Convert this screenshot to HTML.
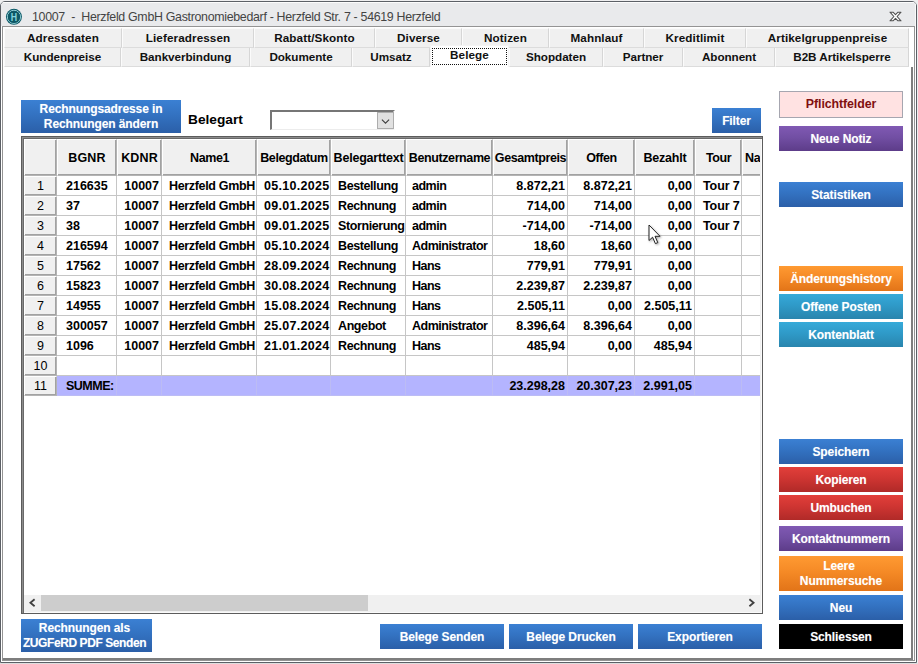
<!DOCTYPE html>
<html lang="de"><head><meta charset="utf-8"><title>10007 - Herzfeld GmbH Gastronomiebedarf</title>
<style>
*{box-sizing:border-box;margin:0;padding:0}
html,body{width:918px;height:664px;overflow:hidden;background:#efeff0;font-family:"Liberation Sans",Arial,sans-serif;}
.abs,.abs>*{position:absolute}
#win{position:absolute;left:0;top:1px;width:917px;height:662px;border:1px solid #5c6066;border-radius:5px 5px 0 0;background:#fff;overflow:hidden}
#tb{position:absolute;left:0;top:0;width:915px;height:24px;background:#e9eaec;border-top:1px solid #fcfcfc;border-right:1px solid #fafafa}
#title{position:absolute;left:31px;top:7px;font-size:12.4px;color:#444;white-space:pre;line-height:16px;letter-spacing:-0.31px}
#frame{position:absolute;left:1px;top:24px;width:913px;height:635px;border:1px solid #949494;background:#fff}
#page{position:absolute;left:2px;top:65px;width:910px;height:593px;border-right:2px solid #7e7e7e;border-bottom:2px solid #7e7e7e;background:#fff}
.tab{position:absolute;height:20px;background:#f0f0f0;border-left:1px solid #fbfbfb;border-top:1px solid #fbfbfb;border-right:1px solid #d6d6d6;border-bottom:1px solid #dcdcdc;font-weight:bold;font-size:11.7px;line-height:18px;text-align:center;color:#111;white-space:nowrap;letter-spacing:.1px}
.tab.act{background:#fff;border:1px solid #f4f4f4;border-bottom:none;height:22px}
.focus{position:absolute;border:1px dotted #111}
.btn{position:absolute;color:#fff;font-weight:bold;font-size:12px;letter-spacing:-.1px;text-align:center;white-space:nowrap;text-shadow:0 0 1px rgba(255,255,255,.35)}
.b-blue{background:linear-gradient(#3b80d3,#3372c1 45%,#2b5fa8)}
.b-red{background:linear-gradient(#e23f3a,#cf3532 45%,#b02a28)}
.b-purple{background:linear-gradient(#8059b3,#724fa4 45%,#5d3c89)}
.b-orange{background:linear-gradient(#ff9a32,#f58a26 45%,#e27418)}
.b-cyan{background:linear-gradient(#36aad9,#2f9ac8 45%,#2985ad)}
.b-black{background:#000}
.b-pink{background:#ffe2e2;border:1px solid #a6a6b0;color:#800f0f;text-shadow:none}
#grid{position:absolute;width:742px;height:478px;border:1px solid #5c5c5c;background:#fff;box-shadow:inset 1px 1px 0 #8c8c8c,inset 2px 2px 0 #6a6a6a,inset -1px -1px 0 #fafafa,inset -2px -2px 0 #f0f0f0}
#gin{position:absolute;left:2px;top:2px;width:736px;height:472px;overflow:hidden}
.hc{position:absolute;background:#f0f0f0;border-left:1px solid #fff;border-top:1px solid #fff;border-right:1px solid #b4b4b4;border-bottom:1px solid #b4b4b4;box-shadow:inset -1px -1px 0 #a2a2a2;font-weight:bold;font-size:12.5px;letter-spacing:-.4px;text-align:center;white-space:nowrap;overflow:hidden;color:#000}
.rc{position:absolute;background:#f0f0f0;border-left:1px solid #fff;border-top:1px solid #fff;border-right:1px solid #b4b4b4;border-bottom:1px solid #b4b4b4;box-shadow:inset -1px -1px 0 #a2a2a2;font-size:12.5px;text-align:center;color:#000;line-height:19px}
.dc{position:absolute;height:20px;border-right:1px solid #c6c6c6;border-bottom:1px solid #c6c6c6;font-weight:bold;font-size:12.5px;line-height:20px;white-space:nowrap;overflow:hidden;color:#000;letter-spacing:-.5px}
.dc.l{padding-left:7px}
.dc.bgnr{padding-left:9px}
.dc.tour{padding-left:8px;letter-spacing:-.1px}
.dc.n.date{letter-spacing:.3px;padding-left:7px}
.dc.name{letter-spacing:-.33px}
.dc.art{letter-spacing:-.4px}
.dc.user{padding-left:6px}
.dc.r{text-align:right;padding-right:2px}
.dc.n{letter-spacing:0}
.sum{background:#b4b4ff;border-color:#bcbcf4}
</style></head><body>
<div id="win">
<div id="tb"></div>
<svg style="position:absolute;left:4px;top:6px" width="18" height="18" viewBox="0 0 18 18"><circle cx="8.95" cy="8.85" r="8" fill="#0f5c6a"/><circle cx="8.95" cy="8.85" r="6.55" fill="none" stroke="#b4eaf0" stroke-width="0.85"/><circle cx="8.95" cy="8.85" r="6.1" fill="#0d5866"/><text x="8.95" y="12.75" font-family="Liberation Sans,Arial,sans-serif" font-weight="bold" font-size="10.8" text-anchor="middle" fill="#86d4de" textLength="6.4" lengthAdjust="spacingAndGlyphs">H</text></svg>
<div id="title">10007  -  Herzfeld GmbH Gastronomiebedarf - Herzfeld Str. 7 - 54619 Herzfeld</div>
<svg style="position:absolute;left:888px;top:9px" width="13" height="11" viewBox="0 0 13 11"><path d="M1 1.2 L4 1.2 L6.5 3.7 L9 1.2 L12 1.2 L8.1 5.5 L12 9.8 L9 9.8 L6.5 7.3 L4 9.8 L1 9.8 L4.9 5.5 Z" fill="#fff" stroke="#505050" stroke-width="1.1" stroke-linejoin="round"/></svg>
<div id="frame"></div>
<div id="page"></div>

<div class="tab" style="left:3px;top:26px;width:118px">Adressdaten</div>
<div class="tab" style="left:121px;top:26px;width:132px">Lieferadressen</div>
<div class="tab" style="left:253px;top:26px;width:121px">Rabatt/Skonto</div>
<div class="tab" style="left:374px;top:26px;width:87px">Diverse</div>
<div class="tab" style="left:461px;top:26px;width:87px">Notizen</div>
<div class="tab" style="left:548px;top:26px;width:95px">Mahnlauf</div>
<div class="tab" style="left:643px;top:26px;width:102px">Kreditlimit</div>
<div class="tab" style="left:745px;top:26px;width:163px">Artikelgruppenpreise</div>
<div class="tab" style="left:3px;top:46px;height:19px;line-height:17px;border-top:none;letter-spacing:-.05px;width:117px">Kundenpreise</div>
<div class="tab" style="left:120px;top:46px;height:19px;line-height:17px;border-top:none;letter-spacing:-.05px;width:129px">Bankverbindung</div>
<div class="tab" style="left:249px;top:46px;height:19px;line-height:17px;border-top:none;letter-spacing:-.05px;width:102px">Dokumente</div>
<div class="tab" style="left:351px;top:46px;height:19px;line-height:17px;border-top:none;letter-spacing:-.05px;width:78px">Umsatz</div>
<div class="tab" style="left:508px;top:46px;height:19px;line-height:17px;border-top:none;letter-spacing:-.05px;width:94px">Shopdaten</div>
<div class="tab" style="left:602px;top:46px;height:19px;line-height:17px;border-top:none;letter-spacing:-.05px;width:80px">Partner</div>
<div class="tab" style="left:682px;top:46px;height:19px;line-height:17px;border-top:none;letter-spacing:-.05px;width:92px">Abonnent</div>
<div class="tab" style="left:774px;top:46px;height:19px;line-height:17px;border-top:none;letter-spacing:-.05px;width:134px">B2B Artikelsperre</div>
<div class="tab act" style="left:429px;top:43px;width:79px;line-height:17px">Belege</div>
<div class="focus" style="left:431px;top:46px;width:75px;height:17px"></div>
<div class="btn b-blue" style="left:20px;top:98px;width:160px;height:33px;line-height:15px;padding-top:1.5px;">Rechnungsadresse in<br>Rechnungen ändern</div>
<div style="position:absolute;left:187px;top:110px;font-weight:bold;font-size:13.7px;line-height:16px;color:#000">Belegart</div>
<div style="position:absolute;left:269px;top:108px;width:125px;height:20px;border:2px solid;border-color:#767676 #fff #ececec #767676;border-bottom-width:1px;background:#fff"></div>
<div style="position:absolute;left:376px;top:110px;width:17px;height:17px;border:1px solid #adadad;background:#e1e1e1"></div>
<svg style="position:absolute;left:379px;top:115px" width="11" height="9" viewBox="0 0 11 9"><path d="M1.9 2.7 L5.5 6.2 L9.1 2.7" fill="none" stroke="#3c3c3c" stroke-width="1.1"/></svg>
<div class="btn b-blue" style="left:711px;top:106px;width:49px;height:25px;line-height:27px;">Filter</div>
<div class="btn b-pink" style="left:778px;top:89px;width:124px;height:27px;line-height:29px;font-size:12.4px;line-height:25px;">Pflichtfelder</div>
<div class="btn b-purple" style="left:778px;top:124px;width:124px;height:25px;line-height:27px;">Neue Notiz</div>
<div class="btn b-blue" style="left:778px;top:180px;width:124px;height:25px;line-height:27px;">Statistiken</div>
<div class="btn b-orange" style="left:778px;top:264px;width:124px;height:25px;line-height:27px;">Änderungshistory</div>
<div class="btn b-cyan" style="left:778px;top:292px;width:124px;height:25px;line-height:27px;">Offene Posten</div>
<div class="btn b-cyan" style="left:778px;top:320px;width:124px;height:25px;line-height:27px;">Kontenblatt</div>
<div class="btn b-blue" style="left:778px;top:437px;width:124px;height:25px;line-height:27px;">Speichern</div>
<div class="btn b-red" style="left:778px;top:465px;width:124px;height:25px;line-height:27px;">Kopieren</div>
<div class="btn b-red" style="left:778px;top:493px;width:124px;height:25px;line-height:27px;">Umbuchen</div>
<div class="btn b-purple" style="left:778px;top:524px;width:124px;height:25px;line-height:27px;">Kontaktnummern</div>
<div class="btn b-orange" style="left:778px;top:554px;width:124px;height:35px;line-height:15px;padding-top:2.5px;"><span style="position:relative;left:-2px">Leere</span><br>Nummersuche</div>
<div class="btn b-blue" style="left:778px;top:593px;width:124px;height:25px;line-height:27px;">Neu</div>
<div class="btn b-black" style="left:778px;top:622px;width:124px;height:25px;line-height:27px;">Schliessen</div>
<div class="btn b-blue" style="left:20px;top:617px;width:131px;height:33px;line-height:15px;padding-top:1.5px;padding-right:4px;">Rechnungen als<br><span style="letter-spacing:-.42px">ZUGFeRD PDF Senden</span></div>
<div class="btn b-blue" style="left:379px;top:622px;width:124px;height:25px;line-height:27px;">Belege Senden</div>
<div class="btn b-blue" style="left:508px;top:622px;width:124px;height:25px;line-height:27px;">Belege Drucken</div>
<div class="btn b-blue" style="left:637px;top:622px;width:124px;height:25px;line-height:27px;">Exportieren</div>
<div id="grid" style="left:20px;top:134px"><div id="gin">
<div class="hc" style="left:0px;top:0;width:33px;height:37px;line-height:36px"></div>
<div class="hc" style="left:33px;top:0;width:60px;height:37px;line-height:36px;letter-spacing:.15px">BGNR</div>
<div class="hc" style="left:93px;top:0;width:45px;height:37px;line-height:36px;letter-spacing:.15px">KDNR</div>
<div class="hc" style="left:138px;top:0;width:95px;height:37px;line-height:36px">Name1</div>
<div class="hc" style="left:233px;top:0;width:74px;height:37px;line-height:36px">Belegdatum</div>
<div class="hc" style="left:307px;top:0;width:75px;height:37px;line-height:36px;letter-spacing:-.2px">Belegarttext</div>
<div class="hc" style="left:382px;top:0;width:87px;height:37px;line-height:36px">Benutzername</div>
<div class="hc" style="left:469px;top:0;width:75px;height:37px;line-height:36px">Gesamtpreis</div>
<div class="hc" style="left:544px;top:0;width:67px;height:37px;line-height:36px">Offen</div>
<div class="hc" style="left:611px;top:0;width:60px;height:37px;line-height:36px;letter-spacing:-.2px">Bezahlt</div>
<div class="hc" style="left:671px;top:0;width:47px;height:37px;line-height:36px">Tour</div>
<div class="hc" style="left:718px;top:0;width:59px;height:37px;line-height:36px;text-align:left;padding-left:2px">Na</div>
<div class="rc" style="left:0px;top:37px;width:33px;height:20px">1</div>
<div class="dc l bgnr n" style="left:33px;top:37px;width:60px">216635</div>
<div class="dc r kdnr n" style="left:93px;top:37px;width:45px">10007</div>
<div class="dc l name" style="left:138px;top:37px;width:95px">Herzfeld GmbH</div>
<div class="dc l date n" style="left:233px;top:37px;width:74px">05.10.2025</div>
<div class="dc l art" style="left:307px;top:37px;width:75px">Bestellung</div>
<div class="dc l user" style="left:382px;top:37px;width:87px">admin</div>
<div class="dc r ges n" style="left:469px;top:37px;width:75px">8.872,21</div>
<div class="dc r off n" style="left:544px;top:37px;width:67px">8.872,21</div>
<div class="dc r bez n" style="left:611px;top:37px;width:60px">0,00</div>
<div class="dc l tour" style="left:671px;top:37px;width:47px">Tour 7</div>
<div class="dc l na" style="left:718px;top:37px;width:59px"></div>
<div class="rc" style="left:0px;top:57px;width:33px;height:20px">2</div>
<div class="dc l bgnr n" style="left:33px;top:57px;width:60px">37</div>
<div class="dc r kdnr n" style="left:93px;top:57px;width:45px">10007</div>
<div class="dc l name" style="left:138px;top:57px;width:95px">Herzfeld GmbH</div>
<div class="dc l date n" style="left:233px;top:57px;width:74px">09.01.2025</div>
<div class="dc l art" style="left:307px;top:57px;width:75px">Rechnung</div>
<div class="dc l user" style="left:382px;top:57px;width:87px">admin</div>
<div class="dc r ges n" style="left:469px;top:57px;width:75px">714,00</div>
<div class="dc r off n" style="left:544px;top:57px;width:67px">714,00</div>
<div class="dc r bez n" style="left:611px;top:57px;width:60px">0,00</div>
<div class="dc l tour" style="left:671px;top:57px;width:47px">Tour 7</div>
<div class="dc l na" style="left:718px;top:57px;width:59px"></div>
<div class="rc" style="left:0px;top:77px;width:33px;height:20px">3</div>
<div class="dc l bgnr n" style="left:33px;top:77px;width:60px">38</div>
<div class="dc r kdnr n" style="left:93px;top:77px;width:45px">10007</div>
<div class="dc l name" style="left:138px;top:77px;width:95px">Herzfeld GmbH</div>
<div class="dc l date n" style="left:233px;top:77px;width:74px">09.01.2025</div>
<div class="dc l art" style="left:307px;top:77px;width:75px">Stornierung</div>
<div class="dc l user" style="left:382px;top:77px;width:87px">admin</div>
<div class="dc r ges n" style="left:469px;top:77px;width:75px">-714,00</div>
<div class="dc r off n" style="left:544px;top:77px;width:67px">-714,00</div>
<div class="dc r bez n" style="left:611px;top:77px;width:60px">0,00</div>
<div class="dc l tour" style="left:671px;top:77px;width:47px">Tour 7</div>
<div class="dc l na" style="left:718px;top:77px;width:59px"></div>
<div class="rc" style="left:0px;top:97px;width:33px;height:20px">4</div>
<div class="dc l bgnr n" style="left:33px;top:97px;width:60px">216594</div>
<div class="dc r kdnr n" style="left:93px;top:97px;width:45px">10007</div>
<div class="dc l name" style="left:138px;top:97px;width:95px">Herzfeld GmbH</div>
<div class="dc l date n" style="left:233px;top:97px;width:74px">05.10.2024</div>
<div class="dc l art" style="left:307px;top:97px;width:75px">Bestellung</div>
<div class="dc l user" style="left:382px;top:97px;width:87px">Administrator</div>
<div class="dc r ges n" style="left:469px;top:97px;width:75px">18,60</div>
<div class="dc r off n" style="left:544px;top:97px;width:67px">18,60</div>
<div class="dc r bez n" style="left:611px;top:97px;width:60px">0,00</div>
<div class="dc l tour" style="left:671px;top:97px;width:47px"></div>
<div class="dc l na" style="left:718px;top:97px;width:59px"></div>
<div class="rc" style="left:0px;top:117px;width:33px;height:20px">5</div>
<div class="dc l bgnr n" style="left:33px;top:117px;width:60px">17562</div>
<div class="dc r kdnr n" style="left:93px;top:117px;width:45px">10007</div>
<div class="dc l name" style="left:138px;top:117px;width:95px">Herzfeld GmbH</div>
<div class="dc l date n" style="left:233px;top:117px;width:74px">28.09.2024</div>
<div class="dc l art" style="left:307px;top:117px;width:75px">Rechnung</div>
<div class="dc l user" style="left:382px;top:117px;width:87px">Hans</div>
<div class="dc r ges n" style="left:469px;top:117px;width:75px">779,91</div>
<div class="dc r off n" style="left:544px;top:117px;width:67px">779,91</div>
<div class="dc r bez n" style="left:611px;top:117px;width:60px">0,00</div>
<div class="dc l tour" style="left:671px;top:117px;width:47px"></div>
<div class="dc l na" style="left:718px;top:117px;width:59px"></div>
<div class="rc" style="left:0px;top:137px;width:33px;height:20px">6</div>
<div class="dc l bgnr n" style="left:33px;top:137px;width:60px">15823</div>
<div class="dc r kdnr n" style="left:93px;top:137px;width:45px">10007</div>
<div class="dc l name" style="left:138px;top:137px;width:95px">Herzfeld GmbH</div>
<div class="dc l date n" style="left:233px;top:137px;width:74px">30.08.2024</div>
<div class="dc l art" style="left:307px;top:137px;width:75px">Rechnung</div>
<div class="dc l user" style="left:382px;top:137px;width:87px">Hans</div>
<div class="dc r ges n" style="left:469px;top:137px;width:75px">2.239,87</div>
<div class="dc r off n" style="left:544px;top:137px;width:67px">2.239,87</div>
<div class="dc r bez n" style="left:611px;top:137px;width:60px">0,00</div>
<div class="dc l tour" style="left:671px;top:137px;width:47px"></div>
<div class="dc l na" style="left:718px;top:137px;width:59px"></div>
<div class="rc" style="left:0px;top:157px;width:33px;height:20px">7</div>
<div class="dc l bgnr n" style="left:33px;top:157px;width:60px">14955</div>
<div class="dc r kdnr n" style="left:93px;top:157px;width:45px">10007</div>
<div class="dc l name" style="left:138px;top:157px;width:95px">Herzfeld GmbH</div>
<div class="dc l date n" style="left:233px;top:157px;width:74px">15.08.2024</div>
<div class="dc l art" style="left:307px;top:157px;width:75px">Rechnung</div>
<div class="dc l user" style="left:382px;top:157px;width:87px">Hans</div>
<div class="dc r ges n" style="left:469px;top:157px;width:75px">2.505,11</div>
<div class="dc r off n" style="left:544px;top:157px;width:67px">0,00</div>
<div class="dc r bez n" style="left:611px;top:157px;width:60px">2.505,11</div>
<div class="dc l tour" style="left:671px;top:157px;width:47px"></div>
<div class="dc l na" style="left:718px;top:157px;width:59px"></div>
<div class="rc" style="left:0px;top:177px;width:33px;height:20px">8</div>
<div class="dc l bgnr n" style="left:33px;top:177px;width:60px">300057</div>
<div class="dc r kdnr n" style="left:93px;top:177px;width:45px">10007</div>
<div class="dc l name" style="left:138px;top:177px;width:95px">Herzfeld GmbH</div>
<div class="dc l date n" style="left:233px;top:177px;width:74px">25.07.2024</div>
<div class="dc l art" style="left:307px;top:177px;width:75px">Angebot</div>
<div class="dc l user" style="left:382px;top:177px;width:87px">Administrator</div>
<div class="dc r ges n" style="left:469px;top:177px;width:75px">8.396,64</div>
<div class="dc r off n" style="left:544px;top:177px;width:67px">8.396,64</div>
<div class="dc r bez n" style="left:611px;top:177px;width:60px">0,00</div>
<div class="dc l tour" style="left:671px;top:177px;width:47px"></div>
<div class="dc l na" style="left:718px;top:177px;width:59px"></div>
<div class="rc" style="left:0px;top:197px;width:33px;height:20px">9</div>
<div class="dc l bgnr n" style="left:33px;top:197px;width:60px">1096</div>
<div class="dc r kdnr n" style="left:93px;top:197px;width:45px">10007</div>
<div class="dc l name" style="left:138px;top:197px;width:95px">Herzfeld GmbH</div>
<div class="dc l date n" style="left:233px;top:197px;width:74px">21.01.2024</div>
<div class="dc l art" style="left:307px;top:197px;width:75px">Rechnung</div>
<div class="dc l user" style="left:382px;top:197px;width:87px">Hans</div>
<div class="dc r ges n" style="left:469px;top:197px;width:75px">485,94</div>
<div class="dc r off n" style="left:544px;top:197px;width:67px">0,00</div>
<div class="dc r bez n" style="left:611px;top:197px;width:60px">485,94</div>
<div class="dc l tour" style="left:671px;top:197px;width:47px"></div>
<div class="dc l na" style="left:718px;top:197px;width:59px"></div>
<div class="rc" style="left:0px;top:217px;width:33px;height:20px">10</div>
<div class="dc l bgnr n" style="left:33px;top:217px;width:60px"></div>
<div class="dc r kdnr n" style="left:93px;top:217px;width:45px"></div>
<div class="dc l name" style="left:138px;top:217px;width:95px"></div>
<div class="dc l date n" style="left:233px;top:217px;width:74px"></div>
<div class="dc l art" style="left:307px;top:217px;width:75px"></div>
<div class="dc l user" style="left:382px;top:217px;width:87px"></div>
<div class="dc r ges n" style="left:469px;top:217px;width:75px"></div>
<div class="dc r off n" style="left:544px;top:217px;width:67px"></div>
<div class="dc r bez n" style="left:611px;top:217px;width:60px"></div>
<div class="dc l tour" style="left:671px;top:217px;width:47px"></div>
<div class="dc l na" style="left:718px;top:217px;width:59px"></div>
<div class="rc" style="left:0px;top:237px;width:33px;height:20px">11</div>
<div class="dc l bgnr sum" style="left:33px;top:237px;width:60px">SUMME:</div>
<div class="dc r kdnr sum n" style="left:93px;top:237px;width:45px"></div>
<div class="dc l name sum" style="left:138px;top:237px;width:95px"></div>
<div class="dc l date sum n" style="left:233px;top:237px;width:74px"></div>
<div class="dc l art sum" style="left:307px;top:237px;width:75px"></div>
<div class="dc l user sum" style="left:382px;top:237px;width:87px"></div>
<div class="dc r ges sum n" style="left:469px;top:237px;width:75px">23.298,28</div>
<div class="dc r off sum n" style="left:544px;top:237px;width:67px">20.307,23</div>
<div class="dc r bez sum n" style="left:611px;top:237px;width:60px">2.991,05</div>
<div class="dc l tour sum" style="left:671px;top:237px;width:47px"></div>
<div class="dc l na sum" style="left:718px;top:237px;width:59px"></div>
<div style="position:absolute;left:0;top:456px;width:736px;height:16px;background:#f0f0f0"></div>
<div style="position:absolute;left:17px;top:456px;width:327px;height:16px;background:#cdcdcd"></div>
<svg style="position:absolute;left:4px;top:459px" width="9" height="10" viewBox="0 0 9 10"><path d="M6.6 1.2 L2.4 4.7 L6.6 8.2" fill="none" stroke="#404040" stroke-width="1.8"/></svg>
<svg style="position:absolute;left:723px;top:459px" width="9" height="10" viewBox="0 0 9 10"><path d="M2.4 1.2 L6.6 4.7 L2.4 8.2" fill="none" stroke="#404040" stroke-width="1.8"/></svg>
</div></div>
<svg style="position:absolute;left:647px;top:222px;filter:drop-shadow(1px 1px 1px rgba(0,0,0,.35));overflow:visible" width="14" height="21" viewBox="0 0 14 21"><path d="M1 1 L1 16.5 L4.6 13.2 L7.4 19.6 L9.8 18.6 L7 12.3 L12 12.3 Z" fill="#fff" stroke="#222" stroke-width="1" stroke-linejoin="miter"/></svg>
</div>
<div style="position:absolute;left:0;top:663px;width:918px;height:1px;background:#dedede"></div>
</body></html>
